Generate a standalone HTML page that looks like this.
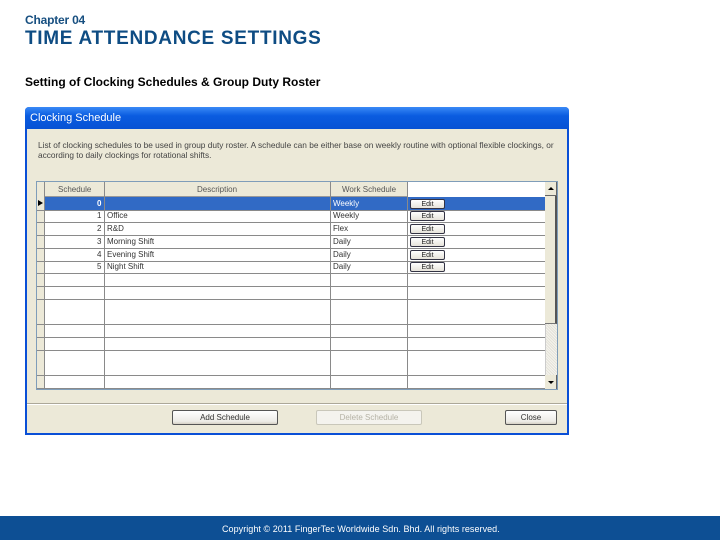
<!DOCTYPE html>
<html><head><style>
*{margin:0;padding:0;box-sizing:border-box}
body{width:720px;height:540px;background:#fff;position:relative;overflow:hidden;font-family:"Liberation Sans",sans-serif}
.a{position:absolute}
.t{font-size:8px;color:#333;white-space:nowrap}
.hl{position:absolute;left:37px;width:508px;height:1px;background:#8a8a8a}
.vl{position:absolute;top:182px;height:207px;width:1px;background:#8a8a8a}
.btn{position:absolute;height:15px;border:1px solid #555;border-radius:2px;background:linear-gradient(#fff,#ecebe6 80%,#d6d0c5);font-size:8px;color:#333;text-align:center;line-height:13px}
.eb{position:absolute;left:410px;width:35px;height:10px;border:1px solid #334;border-radius:2px;background:linear-gradient(#fff,#e6e3da);font-size:7px;color:#222;text-align:center;line-height:9px}
</style></head><body>
<div class="a" style="left:25px;top:13px;font-size:12px;color:#174f80;font-weight:bold;letter-spacing:-0.2px">Chapter 04</div>
<div class="a" style="left:25px;top:28px;font-size:19px;color:#0e4c83;font-weight:bold;letter-spacing:0.7px">TIME ATTENDANCE SETTINGS</div>
<div class="a" style="left:25px;top:75px;font-size:12px;color:#000;font-weight:bold;letter-spacing:0px">Setting of Clocking Schedules &amp; Group Duty Roster</div>

<div class="a" style="left:25px;top:107px;width:544px;height:328px;background:#0a4fd6;border-radius:4px 4px 0 0"></div>
<div class="a" style="left:25px;top:107px;width:544px;height:22px;background:linear-gradient(#3a8af6,#0a5ce0 40%,#0752d4);border-radius:4px 4px 0 0"></div>
<div class="a" style="left:30px;top:112px;font-size:11px;color:#fff">Clocking Schedule</div>
<div class="a" style="left:27px;top:129px;width:540px;height:304px;background:#ece9d8"></div>
<div class="a t" style="left:38px;top:140px;color:#444;font-size:8.3px">List of clocking schedules to be used in group duty roster. A schedule can be either base on weekly routine with optional flexible clockings, or</div>
<div class="a t" style="left:38px;top:150px;color:#444;font-size:8.3px">according to daily clockings for rotational shifts.</div>

<div class="a" style="left:36px;top:181px;width:522px;height:209px;background:#fff;border:1px solid #7f9db9"></div>
<div class="a" style="left:37px;top:182px;width:7px;height:207px;background:#ece9d8"></div>
<div class="a" style="left:44px;top:182px;width:364px;height:15px;background:#ece9d8;border-bottom:1px solid #999"></div>
<div class="a t" style="left:58px;top:185px;color:#555">Schedule</div>
<div class="a t" style="left:197px;top:185px;color:#555">Description</div>
<div class="a t" style="left:342px;top:185px;color:#555">Work Schedule</div>
<div class="a" style="left:44px;top:197px;width:501px;height:13px;background:#316ac5"></div>
<div class="a" style="left:38px;top:200px;width:0;height:0;border-left:5px solid #000;border-top:3px solid transparent;border-bottom:3px solid transparent"></div>

<div class="hl" style="top:210px"></div><div class="hl" style="top:222px"></div><div class="hl" style="top:235px"></div><div class="hl" style="top:248px"></div><div class="hl" style="top:261px"></div><div class="hl" style="top:273px"></div><div class="hl" style="top:286px"></div><div class="hl" style="top:299px"></div><div class="hl" style="top:324px"></div><div class="hl" style="top:337px"></div><div class="hl" style="top:350px"></div><div class="hl" style="top:375px"></div><div class="hl" style="top:388px"></div>
<div class="vl" style="left:44px"></div><div class="vl" style="left:104px"></div><div class="vl" style="left:330px"></div><div class="vl" style="left:407px"></div>

<div class="a t" style="left:97px;top:199px;color:#fff;font-weight:bold">0</div>
<div class="a t" style="left:333px;top:199px;color:#fff">Weekly</div>
<div class="a t" style="left:97px;top:211px">1</div><div class="a t" style="left:107px;top:211px">Office</div><div class="a t" style="left:333px;top:211px">Weekly</div>
<div class="a t" style="left:97px;top:224px">2</div><div class="a t" style="left:107px;top:224px">R&amp;D</div><div class="a t" style="left:333px;top:224px">Flex</div>
<div class="a t" style="left:97px;top:237px">3</div><div class="a t" style="left:107px;top:237px">Morning Shift</div><div class="a t" style="left:333px;top:237px">Daily</div>
<div class="a t" style="left:97px;top:250px">4</div><div class="a t" style="left:107px;top:250px">Evening Shift</div><div class="a t" style="left:333px;top:250px">Daily</div>
<div class="a t" style="left:97px;top:262px">5</div><div class="a t" style="left:107px;top:262px">Night Shift</div><div class="a t" style="left:333px;top:262px">Daily</div>
<div class="eb" style="top:199px">Edit</div><div class="eb" style="top:211px">Edit</div><div class="eb" style="top:224px">Edit</div><div class="eb" style="top:237px">Edit</div><div class="eb" style="top:250px">Edit</div><div class="eb" style="top:262px">Edit</div>

<div class="a" style="left:545px;top:182px;width:12px;height:207px;background:repeating-linear-gradient(45deg,#f4f3ee 0 1px,#e4e2d8 1px 2px);border-left:1px solid #ccc"></div>
<div class="a" style="left:545px;top:182px;width:12px;height:14px;background:#ece9d8;border-right:1px solid #666;border-bottom:1px solid #666"></div>
<div class="a" style="left:548px;top:187px;width:0;height:0;border-bottom:3px solid #000;border-left:3px solid transparent;border-right:3px solid transparent"></div>
<div class="a" style="left:545px;top:196px;width:12px;height:128px;background:#ece9d8;border-right:2px solid #555;border-bottom:1px solid #777"></div>
<div class="a" style="left:545px;top:375px;width:12px;height:14px;background:#ece9d8;border-right:1px solid #666"></div>
<div class="a" style="left:548px;top:381px;width:0;height:0;border-top:3px solid #000;border-left:3px solid transparent;border-right:3px solid transparent"></div>

<div class="a" style="left:27px;top:403px;width:540px;height:1px;background:#aca899"></div>
<div class="a" style="left:27px;top:404px;width:540px;height:1px;background:#fff"></div>
<div class="btn" style="left:172px;top:410px;width:106px">Add Schedule</div>
<div class="btn" style="left:316px;top:410px;width:106px;border-color:#c9c7ba;color:#b5b2a5;background:#f4f3ee">Delete Schedule</div>
<div class="btn" style="left:505px;top:410px;width:52px">Close</div>

<div class="a" style="left:0;top:516px;width:720px;height:24px;background:#0d4f94"></div>
<div class="a" style="left:222px;top:524px;font-size:9px;color:#fff;letter-spacing:0.05px">Copyright © 2011 FingerTec Worldwide Sdn. Bhd. All rights reserved.</div>
</body></html>
